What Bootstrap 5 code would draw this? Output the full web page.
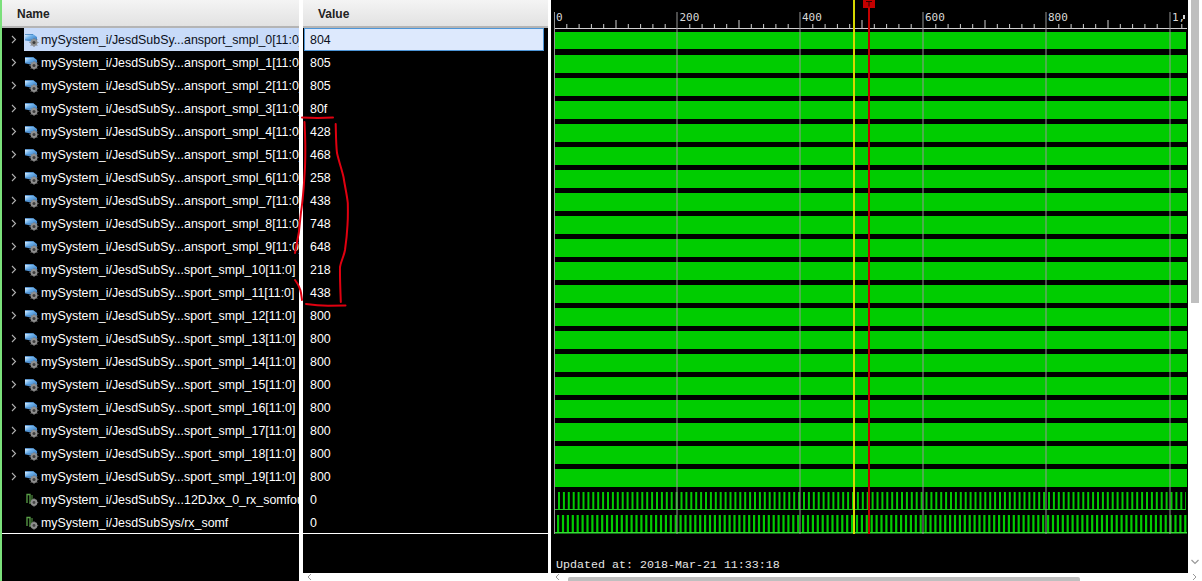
<!DOCTYPE html>
<html lang="en">
<head>
<meta charset="utf-8">
<title>Waveform</title>
<link href="https://cdn.jsdelivr.net/npm/bootstrap@5.3.0/dist/css/bootstrap.min.css" rel="stylesheet">
<style>
html,body{height:581px;overflow:hidden;background:#fff;margin:0}
.wv-root{height:581px;font:12.4px/23px "Liberation Sans",Arial,sans-serif;color:#fff;position:relative}
.wv-strip{width:2px;background:#7be07b;flex:none}
.wv-name{width:297px;flex:none;background:#000}
.wv-value{width:245px;flex:none;margin-left:4px;background:#000}
.wv-wave{width:651px;flex:none;margin-left:3px}
.wv-head{height:28px;flex:none;background:linear-gradient(#f4f4f4,#e2e2e2);border-bottom:2px solid #b4b4b4;color:#222;font-weight:700;font-size:12px;line-height:28px}
.wv-name .wv-head{padding-left:15px}
.wv-value .wv-head{padding-left:15px}
.wv-list{height:506px;flex:none;overflow:hidden;border-bottom:1px solid #fff}
.wv-row{height:23px;white-space:nowrap;overflow:hidden;flex:none}
.wv-chev{width:22px;flex:none;padding-left:9px}
.wv-cell{flex:1;min-width:0;display:flex;align-items:center;overflow:hidden;padding:1px 0 0 1px;height:23px}
.wv-cell svg{flex:none;margin-right:2px}
.wv-cell span{flex:none}
.wv-sel .wv-cell{background:#c8dbf9;color:#0b1020}
.wv-vrow{height:23px;padding-left:7px;line-height:25px}
.wv-vsel{margin-left:1px;width:240px;padding-left:6px;background:#dde9fd;color:#0b1020;box-shadow:inset 0 0 0 1px #4d95d6}
.wv-fill{flex:1;background:#000}
.wv-hbar{height:8px;flex:none;background:#fff;position:relative;overflow:hidden}
.wv-thumb{position:absolute;left:17px;width:512px;top:4px;height:8px;background:#bfbfbf;border-radius:2px 2px 0 0}
.wv-plot{display:block;width:637px;height:573px;background:#000;flex:none}
.wv-plot text{font-family:"DejaVu Sans Mono",monospace;font-size:11px;fill:#d8d8d8}
.wv-plot .wv-stamp{font-family:"Liberation Mono",monospace;font-size:11.67px;fill:#e6e6e6}
.wv-vbar{width:14px;flex:none;background:#fff;position:relative}
.wv-vthumb{width:8px;height:303px;margin-left:3px;background:#bfbfbf}
.wv-ink{position:absolute;left:0;top:0;pointer-events:none}
.wv-abs{position:absolute}
</style>
</head>
<body>
<svg width="0" height="0" class="wv-abs">
  <defs>
    <linearGradient id="wvb" x1="0" y1="0" x2="1" y2="1"><stop offset="0" stop-color="#f2f8ff"/><stop offset=".4" stop-color="#6fb2ec"/><stop offset="1" stop-color="#2a6cb4"/></linearGradient>
    <symbol id="wv-bus" viewBox="0 0 14 14">
      <path d="M0 1h8l4 3v4H7L5 8.5 0 7z" fill="url(#wvb)"/>
      <path d="M0 7h5M0 1.500h8" stroke="#3f7fbe" stroke-width=".8"/>
      <circle cx="9" cy="9.500" r="3.500" fill="#8f8f8f"/>
      <path d="M9 5v1M9 13v1M4.500 9.500h1M12.500 9.500h1M5.800 6.300l.8.8M11.400 11.900l.8.8M12.200 6.300l-.8.8M6.600 11.900l-.8.8" stroke="#7a7a7a"/>
      <circle cx="9" cy="9.500" r="1.500" fill="#3c3c3c"/>
    </symbol>
    <symbol id="wv-bit" viewBox="0 0 14 14">
      <path d="M2 10V1.500h3V11" fill="none" stroke="#5aa048" stroke-width="1.300"/>
      <path d="M7 2v5" stroke="#5aa048" stroke-width="1"/>
      <circle cx="9" cy="9.500" r="3.400" fill="#8f8f8f"/>
      <path d="M9 5.200v1M9 12.800v1M4.800 9.500h1M12.200 9.500h1" stroke="#7a7a7a"/>
      <circle cx="9" cy="9.500" r="1.400" fill="#444"/>
    </symbol>
    <symbol id="wv-right" viewBox="0 0 6 9"><path d="M1 1l3.500 3.500L1 8" fill="none" stroke="#b0b0b0" stroke-width="1.100"/></symbol>
    <pattern id="wv-dot" x="3" y="0" width="5" height="2" patternUnits="userSpaceOnUse"><rect width="2" height="1" fill="#cfe8cf"/></pattern>
  </defs>
</svg>

<div class="wv-root d-flex">
  <div class="wv-strip"></div>

  <div class="wv-name d-flex flex-column">
    <div class="wv-head">Name</div>
    <div class="wv-list">
      <div class="wv-row wv-sel d-flex"><div class="wv-chev bg-black"><svg width="6" height="9"><use href="#wv-right"/></svg></div><div class="wv-cell"><svg width="14" height="14"><use href="#wv-bus"/></svg><span>mySystem_i/JesdSubSy...ansport_smpl_0[11:0]</span></div></div>
      <div class="wv-row d-flex"><div class="wv-chev"><svg width="6" height="9"><use href="#wv-right"/></svg></div><div class="wv-cell"><svg width="14" height="14"><use href="#wv-bus"/></svg><span>mySystem_i/JesdSubSy...ansport_smpl_1[11:0]</span></div></div>
      <div class="wv-row d-flex"><div class="wv-chev"><svg width="6" height="9"><use href="#wv-right"/></svg></div><div class="wv-cell"><svg width="14" height="14"><use href="#wv-bus"/></svg><span>mySystem_i/JesdSubSy...ansport_smpl_2[11:0]</span></div></div>
      <div class="wv-row d-flex"><div class="wv-chev"><svg width="6" height="9"><use href="#wv-right"/></svg></div><div class="wv-cell"><svg width="14" height="14"><use href="#wv-bus"/></svg><span>mySystem_i/JesdSubSy...ansport_smpl_3[11:0]</span></div></div>
      <div class="wv-row d-flex"><div class="wv-chev"><svg width="6" height="9"><use href="#wv-right"/></svg></div><div class="wv-cell"><svg width="14" height="14"><use href="#wv-bus"/></svg><span>mySystem_i/JesdSubSy...ansport_smpl_4[11:0]</span></div></div>
      <div class="wv-row d-flex"><div class="wv-chev"><svg width="6" height="9"><use href="#wv-right"/></svg></div><div class="wv-cell"><svg width="14" height="14"><use href="#wv-bus"/></svg><span>mySystem_i/JesdSubSy...ansport_smpl_5[11:0]</span></div></div>
      <div class="wv-row d-flex"><div class="wv-chev"><svg width="6" height="9"><use href="#wv-right"/></svg></div><div class="wv-cell"><svg width="14" height="14"><use href="#wv-bus"/></svg><span>mySystem_i/JesdSubSy...ansport_smpl_6[11:0]</span></div></div>
      <div class="wv-row d-flex"><div class="wv-chev"><svg width="6" height="9"><use href="#wv-right"/></svg></div><div class="wv-cell"><svg width="14" height="14"><use href="#wv-bus"/></svg><span>mySystem_i/JesdSubSy...ansport_smpl_7[11:0]</span></div></div>
      <div class="wv-row d-flex"><div class="wv-chev"><svg width="6" height="9"><use href="#wv-right"/></svg></div><div class="wv-cell"><svg width="14" height="14"><use href="#wv-bus"/></svg><span>mySystem_i/JesdSubSy...ansport_smpl_8[11:0]</span></div></div>
      <div class="wv-row d-flex"><div class="wv-chev"><svg width="6" height="9"><use href="#wv-right"/></svg></div><div class="wv-cell"><svg width="14" height="14"><use href="#wv-bus"/></svg><span>mySystem_i/JesdSubSy...ansport_smpl_9[11:0]</span></div></div>
      <div class="wv-row d-flex"><div class="wv-chev"><svg width="6" height="9"><use href="#wv-right"/></svg></div><div class="wv-cell"><svg width="14" height="14"><use href="#wv-bus"/></svg><span>mySystem_i/JesdSubSy...sport_smpl_10[11:0]</span></div></div>
      <div class="wv-row d-flex"><div class="wv-chev"><svg width="6" height="9"><use href="#wv-right"/></svg></div><div class="wv-cell"><svg width="14" height="14"><use href="#wv-bus"/></svg><span>mySystem_i/JesdSubSy...sport_smpl_11[11:0]</span></div></div>
      <div class="wv-row d-flex"><div class="wv-chev"><svg width="6" height="9"><use href="#wv-right"/></svg></div><div class="wv-cell"><svg width="14" height="14"><use href="#wv-bus"/></svg><span>mySystem_i/JesdSubSy...sport_smpl_12[11:0]</span></div></div>
      <div class="wv-row d-flex"><div class="wv-chev"><svg width="6" height="9"><use href="#wv-right"/></svg></div><div class="wv-cell"><svg width="14" height="14"><use href="#wv-bus"/></svg><span>mySystem_i/JesdSubSy...sport_smpl_13[11:0]</span></div></div>
      <div class="wv-row d-flex"><div class="wv-chev"><svg width="6" height="9"><use href="#wv-right"/></svg></div><div class="wv-cell"><svg width="14" height="14"><use href="#wv-bus"/></svg><span>mySystem_i/JesdSubSy...sport_smpl_14[11:0]</span></div></div>
      <div class="wv-row d-flex"><div class="wv-chev"><svg width="6" height="9"><use href="#wv-right"/></svg></div><div class="wv-cell"><svg width="14" height="14"><use href="#wv-bus"/></svg><span>mySystem_i/JesdSubSy...sport_smpl_15[11:0]</span></div></div>
      <div class="wv-row d-flex"><div class="wv-chev"><svg width="6" height="9"><use href="#wv-right"/></svg></div><div class="wv-cell"><svg width="14" height="14"><use href="#wv-bus"/></svg><span>mySystem_i/JesdSubSy...sport_smpl_16[11:0]</span></div></div>
      <div class="wv-row d-flex"><div class="wv-chev"><svg width="6" height="9"><use href="#wv-right"/></svg></div><div class="wv-cell"><svg width="14" height="14"><use href="#wv-bus"/></svg><span>mySystem_i/JesdSubSy...sport_smpl_17[11:0]</span></div></div>
      <div class="wv-row d-flex"><div class="wv-chev"><svg width="6" height="9"><use href="#wv-right"/></svg></div><div class="wv-cell"><svg width="14" height="14"><use href="#wv-bus"/></svg><span>mySystem_i/JesdSubSy...sport_smpl_18[11:0]</span></div></div>
      <div class="wv-row d-flex"><div class="wv-chev"><svg width="6" height="9"><use href="#wv-right"/></svg></div><div class="wv-cell"><svg width="14" height="14"><use href="#wv-bus"/></svg><span>mySystem_i/JesdSubSy...sport_smpl_19[11:0]</span></div></div>
      <div class="wv-row d-flex"><div class="wv-chev"></div><div class="wv-cell"><svg width="14" height="14"><use href="#wv-bit"/></svg><span>mySystem_i/JesdSubSy...12DJxx_0_rx_somfout</span></div></div>
      <div class="wv-row d-flex"><div class="wv-chev"></div><div class="wv-cell"><svg width="14" height="14"><use href="#wv-bit"/></svg><span>mySystem_i/JesdSubSys/rx_somf</span></div></div>
    </div>
    <div class="wv-fill"></div>
  </div>

  <div class="wv-value d-flex flex-column">
    <div class="wv-head">Value</div>
    <div class="wv-list">
      <div class="wv-vrow wv-vsel">804</div>
      <div class="wv-vrow">805</div><div class="wv-vrow">805</div><div class="wv-vrow">80f</div>
      <div class="wv-vrow">428</div><div class="wv-vrow">468</div><div class="wv-vrow">258</div><div class="wv-vrow">438</div>
      <div class="wv-vrow">748</div><div class="wv-vrow">648</div><div class="wv-vrow">218</div><div class="wv-vrow">438</div>
      <div class="wv-vrow">800</div><div class="wv-vrow">800</div><div class="wv-vrow">800</div><div class="wv-vrow">800</div>
      <div class="wv-vrow">800</div><div class="wv-vrow">800</div><div class="wv-vrow">800</div><div class="wv-vrow">800</div>
      <div class="wv-vrow">0</div><div class="wv-vrow">0</div>
    </div>
    <div class="wv-fill"></div>
    <div class="wv-hbar"><svg width="12" height="8" class="wv-abs" style="left:2px;top:0"><path d="M6 1L3 4l3 3" fill="none" stroke="#999"/></svg></div>
  </div>

  <div class="wv-wave d-flex flex-column">
    <div class="d-flex" style="height:573px">
      <!-- plot coordinates: x = page x - 551 -->
      <svg class="wv-plot" viewBox="0 0 637 573">
        <!-- ruler -->
        <g stroke="#d0d0d0">
          <path d="M3 28.500H636"/>
          <path d="M15.800 24v4M28.100 24v4M40.400 24v4M52.700 24v4M77.300 24v4M89.600 24v4M101.900 24v4M114.200 24v4M138.800 24v4M151.100 24v4M163.400 24v4M175.700 24v4M200.300 24v4M212.600 24v4M224.900 24v4M237.200 24v4M261.800 24v4M274.100 24v4M286.400 24v4M298.700 24v4M323.300 24v4M335.600 24v4M347.900 24v4M360.200 24v4M384.800 24v4M397.100 24v4M409.400 24v4M421.700 24v4M446.300 24v4M458.600 24v4M470.900 24v4M483.200 24v4M507.800 24v4M520.100 24v4M532.400 24v4M544.700 24v4M569.300 24v4M581.600 24v4M593.900 24v4M606.200 24v4M630.800 24v4"/>
          <path d="M65 20v8M188 20v8M311 20v8M434 20v8M557 20v8"/>
        </g>
        <text x="5" y="21">0</text><text x="128.500" y="21">200</text><text x="251" y="21">400</text><text x="374" y="21">600</text><text x="497" y="21">800</text><text x="621" y="21">1,</text>
        <rect x="632" y="15" width="2" height="4" fill="#d8d8d8"/>
        <!-- buses -->
        <g fill="#00cc00">
          <rect x="4" y="32" width="631" height="17"/><rect x="4" y="55" width="632" height="18"/><rect x="4" y="78" width="632" height="18"/><rect x="4" y="101" width="632" height="18"/>
          <rect x="4" y="124" width="632" height="18"/><rect x="4" y="147" width="632" height="18"/><rect x="4" y="170" width="632" height="18"/><rect x="4" y="193" width="632" height="18"/>
          <rect x="4" y="216" width="632" height="18"/><rect x="4" y="239" width="632" height="18"/><rect x="4" y="262" width="632" height="18"/><rect x="4" y="285" width="632" height="18"/>
          <rect x="4" y="308" width="632" height="18"/><rect x="4" y="331" width="632" height="18"/><rect x="4" y="354" width="632" height="18"/><rect x="4" y="377" width="632" height="18"/>
          <rect x="4" y="400" width="632" height="18"/><rect x="4" y="423" width="632" height="18"/><rect x="4" y="446" width="632" height="18"/><rect x="4" y="469" width="632" height="18"/>
        </g>
        <rect x="4" y="49" width="632" height="1" fill="url(#wv-dot)"/>
        <!-- single-bit pulses -->
        <path d="M7 500.500H635" stroke="#00cc00" stroke-width="17" stroke-dasharray="2 2.900" fill="none"/>
        <rect x="4" y="509" width="631" height="1" fill="#22c422"/>
        <path d="M6 523.500H636" stroke="#00cc00" stroke-width="17" stroke-dasharray="2.200 2.700" fill="none"/>
        <rect x="4" y="532" width="632" height="1.500" fill="#35dd35"/>
        <!-- grid -->
        <g stroke="#969696">
          <path d="M3.500 12V534M126 12V534M249 12V534M372 12V534M495 12V534M619 12V534"/>
        </g>
        <!-- cursors -->
        <rect x="302" y="0" width="2" height="534" fill="#d8d800"/>
        <rect x="317" y="0" width="2" height="534" fill="#c40000"/>
        <rect x="312" y="0" width="12" height="8" fill="#c40000"/>
        <path d="M315 1.500h6M318 1.500v5" stroke="#300" stroke-width="1" fill="none"/>
        <text class="wv-stamp" x="5" y="568">Updated at: 2018-Mar-21 11:33:18</text>
      </svg>
      <div class="wv-vbar d-flex flex-column justify-content-between">
        <div class="wv-vthumb"></div>
        <svg width="14" height="14" class="mb-1"><path d="M3.500 5l3.500 3.500L10.500 5" fill="none" stroke="#999" stroke-width="1.200"/></svg>
      </div>
    </div>
    <div class="wv-hbar">
      <svg width="12" height="8" class="wv-abs" style="left:0;top:0"><path d="M8 1L5 4l3 3" fill="none" stroke="#999"/></svg>
      <div class="wv-thumb"></div>
      <svg width="12" height="8" class="wv-abs" style="right:1px;top:0"><path d="M4 1l3 3-3 3" fill="none" stroke="#999"/></svg>
    </div>
  </div>

  <!-- hand-drawn red marks on top of the screenshot -->
  <svg class="wv-ink" width="400" height="330" fill="none" stroke="#e00010" stroke-width="2" stroke-linecap="round">
    <path d="M302 117.500C312 118 323 118 333 117.500"/>
    <path d="M304.500 122C305.500 140 305.500 155 305 167C304 185 303 200 301 212C300 228 298 240 295 253"/>
    <path d="M295 280C298 284 300 287 301 293L302 300"/>
    <path d="M335.700 124C336 135 336 145 337 153C339 162 342 170 343.500 177C345 187 347 195 347.800 203C348 212 348 218 347.500 225C347 235 346 243 345 250C344 256 341 261 340 267C339.800 280 340.500 292 340.800 302"/>
    <path d="M306 304C313 305 320 305.700 328 305.800L345.500 305.500"/>
  </svg>
</div>
</body>
</html>
